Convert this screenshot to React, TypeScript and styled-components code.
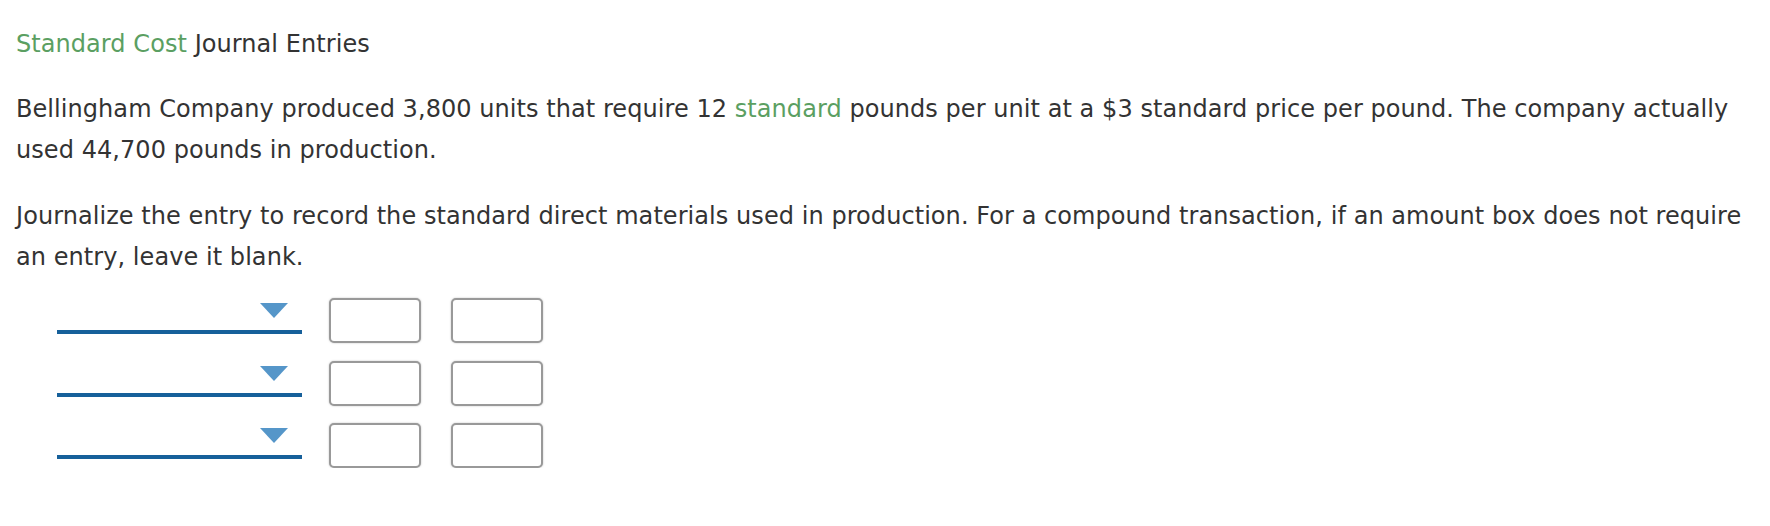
import React from 'react'
import styled, { createGlobalStyle } from 'styled-components'

const GlobalStyle = createGlobalStyle`
  html, body {
    margin: 0;
    padding: 0;
    background: #ffffff;
  }
  body {
    font-family: "DejaVu Sans", Verdana, sans-serif;
    color: #333333;
  }
`

const Page = styled.div`
  padding: 23.5px 0 0 16px;
  font-size: 24px;
  line-height: 41px;
  letter-spacing: 0.06px;
`

const Title = styled.div`
  margin: 0;
`

const Para = styled.p<{ $top: number }>`
  margin: ${(p) => p.$top}px 0 0 0;
`

const Term = styled.span`
  color: #5b9f62;
`

const Entries = styled.div`
  display: flex;
  flex-direction: column;
  gap: 17.5px;
  margin-top: 20.5px;
  padding-left: 41px;
`

const Row = styled.div`
  display: flex;
  align-items: flex-start;
  height: 45px;
`

const Picker = styled.div`
  width: 245px;
  height: 36px;
  box-sizing: border-box;
  border-bottom: 4px solid #16609a;
  display: flex;
  justify-content: flex-end;
  align-items: flex-start;
  padding: 5px 14px 0 0;
  cursor: pointer;
`

const Caret = styled.span`
  width: 0;
  height: 0;
  border-left: 14px solid transparent;
  border-right: 14px solid transparent;
  border-top: 15px solid #5596c9;
`

const Amount = styled.input<{ $first?: boolean }>`
  width: 92px;
  height: 45px;
  box-sizing: border-box;
  margin-left: ${(p) => (p.$first ? 27 : 30)}px;
  border: 2px solid #999999;
  border-radius: 5px;
  box-shadow: 0 0 2px rgba(0, 0, 0, 0.25);
  background: #ffffff;
  outline: none;
  padding: 0 6px;
  font: inherit;
`

const rows = [0, 1, 2]

const App: React.FC = () => {
  return (
    <>
      <GlobalStyle />
      <Page>
        <Title>
          <Term>Standard Cost</Term> Journal Entries
        </Title>
        <Para $top={24}>
          Bellingham Company produced 3,800 units that require 12 <Term>standard</Term> pounds per unit at a $3
          standard price per pound. The company actually used 44,700 pounds in production.
        </Para>
        <Para $top={25}>
          Journalize the entry to record the standard direct materials used in production. For a compound
          transaction, if an amount box does not require an entry, leave it blank.
        </Para>
        <Entries>
          {rows.map((r) => (
            <Row key={r}>
              <Picker role="button">
                <Caret />
              </Picker>
              <Amount $first type="text" />
              <Amount type="text" />
            </Row>
          ))}
        </Entries>
      </Page>
    </>
  )
}

export default App
